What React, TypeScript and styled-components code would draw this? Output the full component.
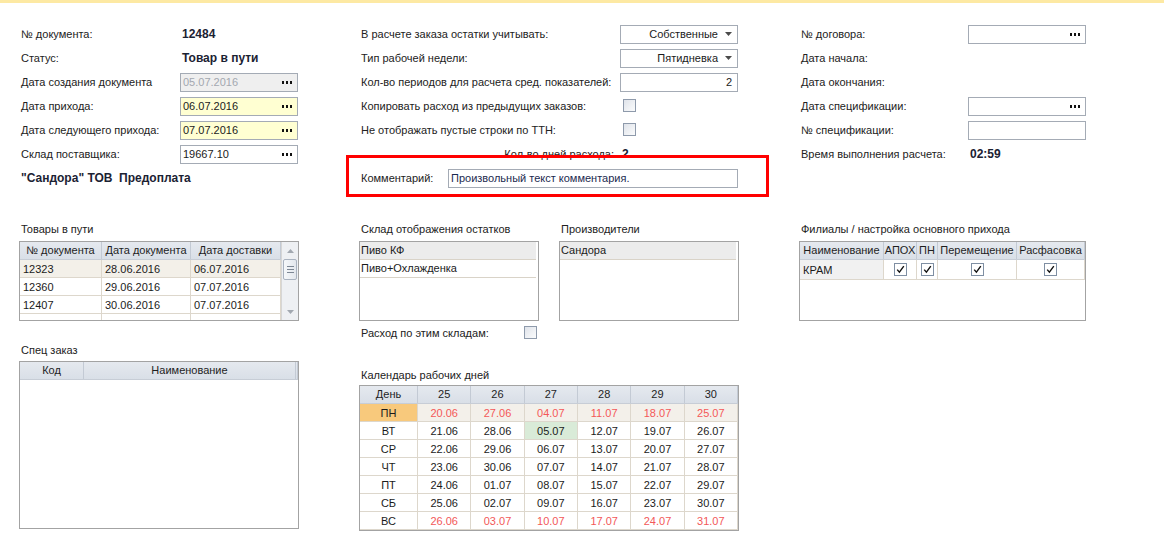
import React from 'react';
import styled, { createGlobalStyle } from 'styled-components';

const GlobalStyle = createGlobalStyle`
  body {
    margin: 0;
    background: #fff;
    font-family: "Liberation Sans", Arial, sans-serif;
    font-size: 11px;
    color: #222;
  }
`;

const Page = styled.div`
  width: 1164px;
  height: 547px;
  overflow: hidden;
`;

const TopStrip = styled.div`
  height: 3px;
  background: #fde9a3;
`;

const Content = styled.div`
  padding: 19px 0 0 19px;
`;

const Section = styled.div`
  display: grid;
  grid-template-columns: 340px 440px 1fr;
`;

const LowerSection = styled(Section)`
  margin-top: 31px;
`;

const Column = styled.div`
  position: relative;
  display: flex;
  flex-direction: column;
`;

const Row = styled.div<{ $cols: string; $h?: number }>`
  display: grid;
  grid-template-columns: ${p => p.$cols};
  align-items: center;
  height: ${p => p.$h ?? 24}px;
`;

const Label = styled.div<{ $right?: boolean }>`
  padding-left: 2px;
  padding-right: ${p => (p.$right ? 6 : 0)}px;
  text-align: ${p => (p.$right ? 'right' : 'left')};
  white-space: nowrap;
  color: #222;
`;

const Value = styled.div`
  padding-left: 2px;
  font-size: 12px;
  font-weight: bold;
  color: #1b2233;
  white-space: nowrap;
`;

const Field = styled.div<{ $bg?: string; $w?: number; $muted?: boolean; $end?: boolean }>`
  box-sizing: border-box;
  width: ${p => p.$w ?? 118}px;
  height: 19px;
  border: 1px solid #a4abb5;
  background: ${p => p.$bg ?? '#fff'};
  color: ${p => (p.$muted ? '#a3a8b0' : '#1b1b1b')};
  display: flex;
  align-items: center;
  justify-content: ${p => (p.$end ? 'flex-end' : 'flex-start')};
  padding: 0 5px 0 1px;
  white-space: nowrap;
`;

const FieldText = styled.span<{ $color?: string }>`
  color: ${p => p.$color ?? 'inherit'};
  padding-left: 1px;
`;

const DotsBox = styled.span`
  margin-left: auto;
  display: flex;
`;

const ArrowBox = styled.span`
  display: flex;
  margin-left: 7px;
`;

const Check = styled.span<{ $checked?: boolean }>`
  box-sizing: border-box;
  display: inline-flex;
  align-items: center;
  justify-content: center;
  width: 13px;
  height: 13px;
  margin-left: ${p => (p.$checked ? 0 : 3)}px;
  border: 1px solid ${p => (p.$checked ? '#7f8fa3' : '#8e9aab')};
  background: ${p =>
    p.$checked ? '#fff' : 'linear-gradient(135deg, #dfe3ea 0%, #f0f2f5 60%, #fafbfc 100%)'};
`;

const Highlight = styled.div`
  position: absolute;
  left: -13px;
  top: 133px;
  width: 423px;
  height: 42px;
  box-sizing: border-box;
  border: 3px solid #ff0000;
  pointer-events: none;
`;

const Title = styled.div<{ $top?: number; $gap?: number }>`
  height: 16px;
  line-height: 16px;
  padding-left: 2px;
  margin-top: ${p => p.$top ?? 0}px;
  margin-bottom: ${p => p.$gap ?? 4}px;
  color: #222;
  white-space: nowrap;
`;

const Box = styled.div<{ $w: number; $h: number }>`
  box-sizing: border-box;
  width: ${p => p.$w}px;
  height: ${p => p.$h}px;
  border: 1px solid #a3a3a3;
  background: #fff;
  overflow: hidden;
  display: flex;
`;

const GridArea = styled.div`
  flex: 1;
  display: flex;
  flex-direction: column;
  min-width: 0;
`;

const HeadRow = styled.div<{ $cols: string }>`
  display: grid;
  grid-template-columns: ${p => p.$cols};
  height: 18px;
  flex-shrink: 0;
  box-sizing: border-box;
  border-bottom: 1px solid #c7cdd6;
  background: linear-gradient(#e5e9ef, #d9dfe7);
`;

const HeadCell = styled.div`
  border-right: 1px solid #c3cad4;
  text-align: center;
  line-height: 17px;
  color: #1e1e1e;
  white-space: nowrap;
  overflow: hidden;
`;

const BodyRow = styled.div<{ $cols: string; $bg?: string; $h?: number }>`
  display: grid;
  grid-template-columns: ${p => p.$cols};
  height: ${p => p.$h ?? 18}px;
  flex-shrink: 0;
  box-sizing: border-box;
  border-bottom: 1px solid #ddd7cc;
  background: ${p => p.$bg ?? '#fff'};
`;

const Cell = styled.div<{ $center?: boolean; $bg?: string; $color?: string }>`
  display: flex;
  align-items: center;
  justify-content: ${p => (p.$center ? 'center' : 'flex-start')};
  padding-left: ${p => (p.$center ? 0 : 3)}px;
  border-right: 1px solid #ddd7cc;
  background: ${p => p.$bg ?? 'transparent'};
  color: ${p => p.$color ?? '#1b1b1b'};
  white-space: nowrap;
  overflow: hidden;
`;

const ListRow = styled.div<{ $bg?: string }>`
  height: 18px;
  box-sizing: border-box;
  flex-shrink: 0;
  border-bottom: 1px solid #d9d3c8;
  background: ${p => p.$bg ?? '#fff'};
  line-height: 17px;
  padding-left: 1px;
  margin-right: 2px;
  color: #1b1b1b;
`;

const Scroll = styled.div`
  width: 17px;
  flex-shrink: 0;
  box-sizing: border-box;
  border-left: 1px solid #d6d6d6;
  background: #eef0f3;
  display: flex;
  flex-direction: column;
  align-items: center;
`;

const ScrollBtn = styled.div`
  height: 17px;
  width: 100%;
  display: flex;
  align-items: center;
  justify-content: center;
`;

const ScrollGap = styled.div`
  flex: 1;
`;

const Thumb = styled.div`
  box-sizing: border-box;
  width: 14px;
  height: 21px;
  border: 1px solid #aab3c0;
  border-radius: 2px;
  background: linear-gradient(90deg, #f6f8fa, #e3e7ed);
  display: flex;
  flex-direction: column;
  align-items: center;
  justify-content: center;
  gap: 2px;
  & > i {
    display: block;
    width: 7px;
    height: 1px;
    background: #7d8794;
  }
`;

const ListPair = styled.div`
  display: flex;
  gap: 20px;
`;

const Stack = styled.div`
  display: flex;
  flex-direction: column;
`;

const Dots = () => (
  <DotsBox>
    <svg width="10" height="3" viewBox="0 0 10 3">
      <rect x="0" y="0" width="2" height="3" fill="#111" />
      <rect x="4" y="0" width="2" height="3" fill="#111" />
      <rect x="8" y="0" width="2" height="3" fill="#111" />
    </svg>
  </DotsBox>
);

const Arrow = () => (
  <ArrowBox>
    <svg width="7" height="4" viewBox="0 0 7 4">
      <path d="M0 0h7L3.5 4z" fill="#4b4b4b" />
    </svg>
  </ArrowBox>
);

const Tick = () => (
  <svg width="9" height="9" viewBox="0 0 9 9">
    <path d="M1.2 4.6 L3.4 7.2 L7.8 1.2" stroke="#111" strokeWidth="1.4" fill="none" />
  </svg>
);

const CheckBox = ({ checked }: { checked?: boolean }) => (
  <Check $checked={checked}>{checked && <Tick />}</Check>
);

const RED = '#f35858';
const days = ['ПН', 'ВТ', 'СР', 'ЧТ', 'ПТ', 'СБ', 'ВС'];
const weeks = [25, 26, 27, 28, 29, 30];

const fmt = (n: number) => {
  const d = n <= 30 ? n : n - 30;
  const m = n <= 30 ? '06' : '07';
  return `${String(d).padStart(2, '0')}.${m}`;
};

const calCols = '58px repeat(6, 1fr)';
const goodsCols = '82px 89px 90px';
const branchCols = '84px 33px 21px 79px 1fr';

const goods = [
  ['12323', '28.06.2016', '06.07.2016'],
  ['12360', '29.06.2016', '07.07.2016'],
  ['12407', '30.06.2016', '07.07.2016'],
  ['', '', ''],
];

export default function App() {
  return (
    <Page>
      <GlobalStyle />
      <TopStrip />
      <Content>
        <Section>
          <Column>
            <Row $cols="161px 118px">
              <Label>№ документа:</Label>
              <Value>12484</Value>
            </Row>
            <Row $cols="161px 118px">
              <Label>Статус:</Label>
              <Value>Товар в пути</Value>
            </Row>
            <Row $cols="161px 118px">
              <Label>Дата создания документа</Label>
              <Field $bg="#efefef" $muted>
                <FieldText>05.07.2016</FieldText>
                <Dots />
              </Field>
            </Row>
            <Row $cols="161px 118px">
              <Label>Дата прихода:</Label>
              <Field $bg="#ffffd2">
                <FieldText>06.07.2016</FieldText>
                <Dots />
              </Field>
            </Row>
            <Row $cols="161px 118px">
              <Label>Дата следующего прихода:</Label>
              <Field $bg="#ffffd2">
                <FieldText>07.07.2016</FieldText>
                <Dots />
              </Field>
            </Row>
            <Row $cols="161px 118px">
              <Label>Склад поставщика:</Label>
              <Field>
                <FieldText>19667.10</FieldText>
                <Dots />
              </Field>
            </Row>
            <Row $cols="1fr">
              <Value>"Сандора" ТОВ&nbsp;&nbsp;Предоплата</Value>
            </Row>
          </Column>

          <Column>
            <Row $cols="261px 118px">
              <Label>В расчете заказа остатки учитывать:</Label>
              <Field $end>
                <FieldText>Собственные</FieldText>
                <Arrow />
              </Field>
            </Row>
            <Row $cols="261px 118px">
              <Label>Тип рабочей недели:</Label>
              <Field $end>
                <FieldText>Пятидневка</FieldText>
                <Arrow />
              </Field>
            </Row>
            <Row $cols="261px 118px">
              <Label>Кол-во периодов для расчета сред. показателей:</Label>
              <Field $end>
                <FieldText>2</FieldText>
              </Field>
            </Row>
            <Row $cols="261px 118px">
              <Label>Копировать расход из предыдущих заказов:</Label>
              <div>
                <CheckBox />
              </div>
            </Row>
            <Row $cols="261px 118px">
              <Label>Не отображать пустые строки по ТТН:</Label>
              <div>
                <CheckBox />
              </div>
            </Row>
            <Row $cols="261px 118px">
              <Label $right>Кол-во дней расхода:</Label>
              <Value>2</Value>
            </Row>
            <Row $cols="89px 290px">
              <Label>Комментарий:</Label>
              <Field $w={290}>
                <FieldText $color="#1c2a4f">Произвольный текст комментария.</FieldText>
              </Field>
            </Row>
            <Highlight />
          </Column>

          <Column>
            <Row $cols="169px 118px">
              <Label>№ договора:</Label>
              <Field>
                <Dots />
              </Field>
            </Row>
            <Row $cols="169px 118px">
              <Label>Дата начала:</Label>
            </Row>
            <Row $cols="169px 118px">
              <Label>Дата окончания:</Label>
            </Row>
            <Row $cols="169px 118px">
              <Label>Дата спецификации:</Label>
              <Field>
                <Dots />
              </Field>
            </Row>
            <Row $cols="169px 118px">
              <Label>№ спецификации:</Label>
              <Field />
            </Row>
            <Row $cols="169px 118px">
              <Label>Время выполнения расчета:</Label>
              <Value>02:59</Value>
            </Row>
          </Column>
        </Section>

        <LowerSection>
          <Column>
            <Title>Товары в пути</Title>
            <Box $w={280} $h={80}>
              <GridArea>
                <HeadRow $cols={goodsCols}>
                  <HeadCell>№ документа</HeadCell>
                  <HeadCell>Дата документа</HeadCell>
                  <HeadCell>Дата доставки</HeadCell>
                </HeadRow>
                {goods.map((g, i) => (
                  <BodyRow key={i} $cols={goodsCols} $bg={i === 0 ? '#f3f0e9' : '#fff'}>
                    {g.map((c, j) => (
                      <Cell key={j}>{c}</Cell>
                    ))}
                  </BodyRow>
                ))}
              </GridArea>
              <Scroll>
                <ScrollBtn>
                  <svg width="7" height="4" viewBox="0 0 7 4">
                    <path d="M0 4h7L3.5 0z" fill="#a2a8b0" />
                  </svg>
                </ScrollBtn>
                <Thumb>
                  <i />
                  <i />
                  <i />
                </Thumb>
                <ScrollGap />
                <ScrollBtn>
                  <svg width="7" height="4" viewBox="0 0 7 4">
                    <path d="M0 0h7L3.5 4z" fill="#a2a8b0" />
                  </svg>
                </ScrollBtn>
              </Scroll>
            </Box>

            <Title $top={21} $gap={3}>Спец заказ</Title>
            <Box $w={280} $h={168}>
              <GridArea>
                <HeadRow $cols="64px 1fr 2px">
                  <HeadCell>Код</HeadCell>
                  <HeadCell>Наименование</HeadCell>
                  <HeadCell />
                </HeadRow>
              </GridArea>
            </Box>
          </Column>

          <Column>
            <ListPair>
              <Stack>
                <Title>Склад отображения остатков</Title>
                <Box $w={180} $h={80}>
                  <GridArea>
                    <ListRow $bg="#ececec">Пиво КФ</ListRow>
                    <ListRow>Пиво+Охлажденка</ListRow>
                  </GridArea>
                </Box>
              </Stack>
              <Stack>
                <Title>Производители</Title>
                <Box $w={180} $h={80}>
                  <GridArea>
                    <ListRow $bg="#ececec">Сандора</ListRow>
                  </GridArea>
                </Box>
              </Stack>
            </ListPair>
            <Row $cols="162px 20px">
              <Label>Расход по этим складам:</Label>
              <div>
                <CheckBox />
              </div>
            </Row>

            <Title $top={22} $gap={2}>Календарь рабочих дней</Title>
            <Box $w={380} $h={146}>
              <GridArea>
                <HeadRow $cols={calCols}>
                  <HeadCell>День</HeadCell>
                  {weeks.map(w => (
                    <HeadCell key={w}>{w}</HeadCell>
                  ))}
                </HeadRow>
                {days.map((d, di) => {
                  const weekend = di === 0 || di === 6;
                  return (
                    <BodyRow key={d} $cols={calCols} $bg={di === 0 ? '#f3f0ea' : '#fff'}>
                      <Cell $center $bg={di === 0 ? '#f8c97c' : undefined}>
                        {d}
                      </Cell>
                      {weeks.map((w, wi) => (
                        <Cell
                          key={w}
                          $center
                          $color={weekend ? RED : undefined}
                          $bg={di === 1 && wi === 2 ? '#d9ebd8' : undefined}
                        >
                          {fmt(20 + wi * 7 + di)}
                        </Cell>
                      ))}
                    </BodyRow>
                  );
                })}
              </GridArea>
            </Box>
          </Column>

          <Column>
            <Title>Филиалы / настройка основного прихода</Title>
            <Box $w={287} $h={80}>
              <GridArea>
                <HeadRow $cols={branchCols}>
                  <HeadCell>Наименование</HeadCell>
                  <HeadCell>АПОХ</HeadCell>
                  <HeadCell>ПН</HeadCell>
                  <HeadCell>Перемещение</HeadCell>
                  <HeadCell>Расфасовка</HeadCell>
                </HeadRow>
                <BodyRow $cols={branchCols} $h={20}>
                  <Cell $bg="#f1f1f1">КРАМ</Cell>
                  <Cell $center>
                    <CheckBox checked />
                  </Cell>
                  <Cell $center>
                    <CheckBox checked />
                  </Cell>
                  <Cell $center>
                    <CheckBox checked />
                  </Cell>
                  <Cell $center>
                    <CheckBox checked />
                  </Cell>
                </BodyRow>
              </GridArea>
            </Box>
          </Column>
        </LowerSection>
      </Content>
    </Page>
  );
}
